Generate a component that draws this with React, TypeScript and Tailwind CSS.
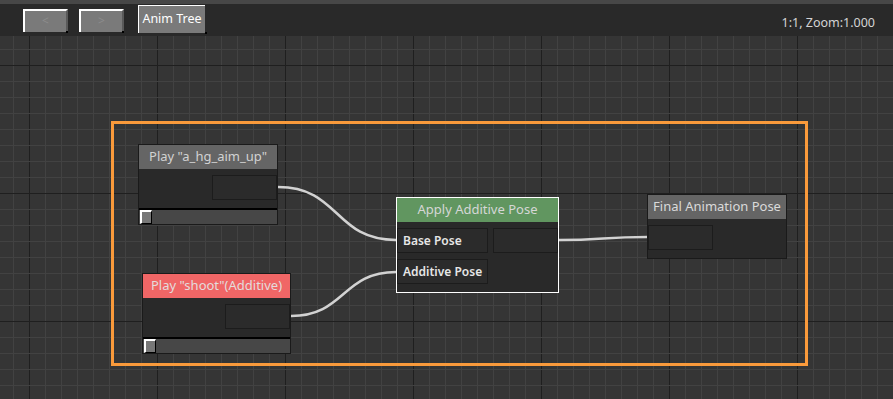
import React from "react";

const font = { fontFamily: '"Noto Sans", "DejaVu Sans", sans-serif' };

function ToolButton({ label, wide }: { label: string; wide?: boolean }) {
  return (
    <div
      className={
        wide
          ? "relative flex h-[28px] w-[67px] items-center justify-center border-l border-t border-white bg-[#7a7a7a] text-[12.5px] text-white"
          : "relative flex h-[23px] w-[45px] items-center justify-center border-l-2 border-t-2 border-white border-r-2 border-r-[#5a5a5a] bg-[#7a7a7a] text-[12px] text-[#8c8c8c]"
      }
    >
      {label}
      <span className="absolute -bottom-px -right-[2px] h-[2px] w-[2px] bg-black" />
    </div>
  );
}

function Slider() {
  return (
    <div className="flex h-[16px] border-t-2 border-black bg-[#474747]">
      <div className="ml-px h-[14px] w-[12px] border-l-2 border-t-2 border-white border-r border-b border-r-black border-b-black bg-[#777]" />
    </div>
  );
}

function Box({ w, children }: { w: string; children?: React.ReactNode }) {
  return (
    <div className={`flex h-[25px] items-center border border-[#1c1c1c] bg-[#2b2b2b] pl-[5px] text-[12px] font-semibold text-[#e6e6e6] ${w}`}>
      {children}
    </div>
  );
}

function Header({ title, bg, text }: { title: string; bg: string; text: string }) {
  return (
    <div className={`flex h-[24px] items-center justify-center text-[13px] ${bg} ${text}`}>{title}</div>
  );
}

function Grid() {
  const v: number[] = [];
  for (let x = 13; x < 893; x += 16) v.push(x);
  const h: number[] = [];
  for (let y = 13; y < 363; y += 16) h.push(y);
  return (
    <svg className="absolute left-0 top-0" width={893} height={363}>
      <rect width={893} height={363} fill="#353535" />
      {v.map((x) => (
        <line key={"v" + x} x1={x + 0.5} x2={x + 0.5} y1={0} y2={363} stroke={(x - 29) % 128 === 0 ? "#1f1f1f" : "#424242"} />
      ))}
      {h.map((y) => (
        <line key={"h" + y} y1={y + 0.5} y2={y + 0.5} x1={0} x2={893} stroke={(y - 29) % 128 === 0 ? "#1f1f1f" : "#424242"} />
      ))}
    </svg>
  );
}

export default function App() {
  return (
    <div className="flex h-[399px] w-[893px] flex-col overflow-hidden bg-[#353535]" style={font}>
      {/* toolbar */}
      <div className="flex h-[36px] shrink-0 items-center border-t-4 border-[#474747] bg-[#292929] pl-[23px] pr-[18px]">
        <ToolButton label="<" />
        <div className="ml-[11px]">
          <ToolButton label=">" />
        </div>
        <div className="ml-[14px] -mt-[3px]">
          <ToolButton label="Anim Tree" wide />
        </div>
        <div className="ml-auto mt-[7px] text-[12.5px] text-[#d4d4d4]">1:1, Zoom:1.000</div>
      </div>

      {/* canvas */}
      <div className="relative flex-1">
        <Grid />

        {/* group frame */}
        <div className="absolute left-[111px] top-[85px] h-[245px] w-[697px] border-[3px] border-[#fa9a3b]" />

        {/* wires */}
        <svg className="absolute left-0 top-0" width={893} height={363}>
          <g fill="none" stroke="#d2d2d2" strokeWidth={2.5}>
            <path d="M278 151 C 340 151, 334 204, 396 204" />
            <path d="M291 280 C 345 280, 342 236, 396 236" />
            <path d="M559 204 C 603 204, 603 201, 647 201" />
          </g>
        </svg>

        {/* Play a_hg_aim_up */}
        <div className="absolute left-[138px] top-[108px] w-[140px] border border-[#1a1a1a] bg-[#292929]">
          <Header title={'Play "a_hg_aim_up"'} bg="bg-[#656565]" text="text-[#d2d2d2]" />
          <div className="flex h-[39px] justify-end pt-[6px]">
            <Box w="w-[65px]" />
          </div>
          <Slider />
        </div>

        {/* Play shoot */}
        <div className="absolute left-[142px] top-[237px] w-[149px] border border-[#1a1a1a] bg-[#292929]">
          <Header title={'Play "shoot"(Additive)'} bg="bg-[#f06666]" text="text-[#e4dcdc]" />
          <div className="flex h-[39px] justify-end pt-[6px]">
            <Box w="w-[65px]" />
          </div>
          <Slider />
        </div>

        {/* Apply Additive Pose */}
        <div className="absolute left-[396px] top-[161px] w-[163px] border border-white bg-[#292929]">
          <Header title="Apply Additive Pose" bg="bg-[#619660]" text="text-[#d6d6d6]" />
          <div className="flex h-[70px] flex-col gap-[6px] pt-[6px]">
            <div className="flex justify-between">
              <Box w="w-[91px]">Base Pose</Box>
              <Box w="w-[65px]" />
            </div>
            <Box w="w-[91px]">Additive Pose</Box>
          </div>
        </div>

        {/* Final Animation Pose */}
        <div className="absolute left-[647px] top-[158px] w-[140px] border border-[#1a1a1a] bg-[#292929]">
          <Header title="Final Animation Pose" bg="bg-[#656565]" text="text-[#dadada]" />
          <div className="flex h-[39px] pt-[6px]">
            <Box w="w-[65px]" />
          </div>
        </div>
      </div>
    </div>
  );
}
